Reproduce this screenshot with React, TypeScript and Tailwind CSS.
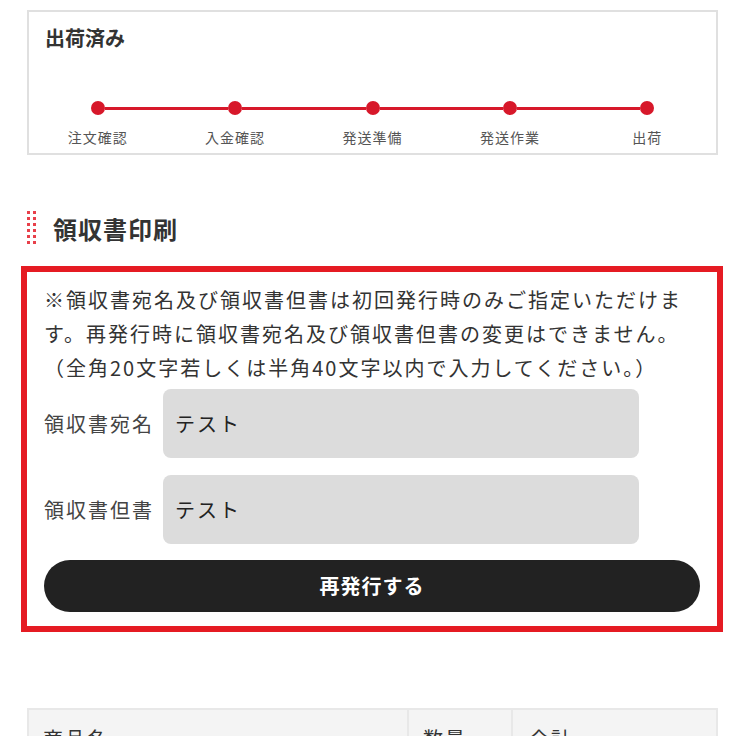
import React from 'react';

const steps = ['注文確認', '入金確認', '発送準備', '発送作業', '出荷'];

const StatusCard: React.FC = () => (
  <section className="ml-[27px] w-[691px] border-2 border-[#e0e0e0] pt-[12px] pb-[6px]">
    <h2 className="px-[16px] text-[20px] leading-[28px] font-bold text-[#333]">出荷済み</h2>
    <div className="mt-[49px] grid grid-cols-5">
      {steps.map((label, i) => (
        <div key={label} className="flex flex-col items-center">
          <div className="flex h-[14px] w-full items-center">
            <div className={i === 0 ? 'h-[3px] flex-1' : 'h-[3px] flex-1 bg-[#d7182a]'} />
            <div className="h-[14px] w-[14px] rounded-full bg-[#d7182a]" />
            <div className={i === steps.length - 1 ? 'h-[3px] flex-1' : 'h-[3px] flex-1 bg-[#d7182a]'} />
          </div>
          <span className="mt-[12px] text-[14px] leading-[20px] tracking-[1px] text-[#555]">{label}</span>
        </div>
      ))}
    </div>
  </section>
);

const SectionTitle: React.FC<{ children: React.ReactNode }> = ({ children }) => (
  <div className="ml-[27px] mt-[56px] flex items-start">
    <div className="grid grid-cols-2 gap-[3px]">
      {Array.from({ length: 12 }).map((_, i) => (
        <span key={i} className="h-[3px] w-[3px] bg-[#e8404a]" />
      ))}
    </div>
    <h2 className="ml-[17px] mt-[3px] text-[24px] leading-[30px] font-bold tracking-[1px] text-[#333]">{children}</h2>
  </div>
);

const FieldRow: React.FC<{ label: string; value: string; className?: string }> = ({ label, value, className }) => (
  <div className={`flex items-center ${className ?? ''}`}>
    <label className="w-[119px] shrink-0 text-[20px] tracking-[2px] text-[#444]">{label}</label>
    <input
      defaultValue={value}
      className="h-[69px] w-[476px] rounded-[8px] border-0 bg-[#dcdcdc] px-[12px] text-[20px] tracking-[2px] text-[#222] outline-none"
    />
  </div>
);

export default function App() {
  return (
    <div className="w-[750px] bg-white pt-[10px] pb-[40px] font-['Noto_Sans_CJK_JP',sans-serif] text-[#333]">
      <StatusCard />

      <SectionTitle>領収書印刷</SectionTitle>

      {/* Receipt form */}
      <section className="ml-[21px] mt-[22px] w-[702px] border-[6px] border-[#e51b23] px-[17px] pt-[11px] pb-[14px]">
        <p className="text-[20px] leading-[34px] tracking-[2px] text-[#333]">
          ※領収書宛名及び領収書但書は初回発行時のみご指定いただけます。再発行時に領収書宛名及び領収書但書の変更はできません。
          <br />
          （全角20文字若しくは半角40文字以内で入力してください。）
        </p>
        <FieldRow label="領収書宛名" value="テスト" className="mt-[4px]" />
        <FieldRow label="領収書但書" value="テスト" className="mt-[17px]" />
        <button className="mt-[16px] h-[52px] w-full rounded-full bg-[#222] text-[20px] font-bold tracking-[1px] text-white">
          再発行する
        </button>
      </section>

      {/* Items table */}
      <table className="ml-[27px] mt-[76px] w-[691px] border-collapse">
        <thead>
          <tr className="bg-[#f4f4f4]">
            <th className="w-[380px] border-2 border-[#e8e8e8] px-[14px] py-[12px] text-left text-[20px] leading-[34px] font-normal tracking-[2px]">商品名</th>
            <th className="w-[104px] border-2 border-[#e8e8e8] px-[14px] py-[12px] text-left text-[20px] leading-[34px] font-normal tracking-[2px]">数量</th>
            <th className="border-2 border-[#e8e8e8] px-[16px] py-[12px] text-left text-[20px] leading-[34px] font-normal tracking-[2px]">合計</th>
          </tr>
        </thead>
      </table>
    </div>
  );
}
